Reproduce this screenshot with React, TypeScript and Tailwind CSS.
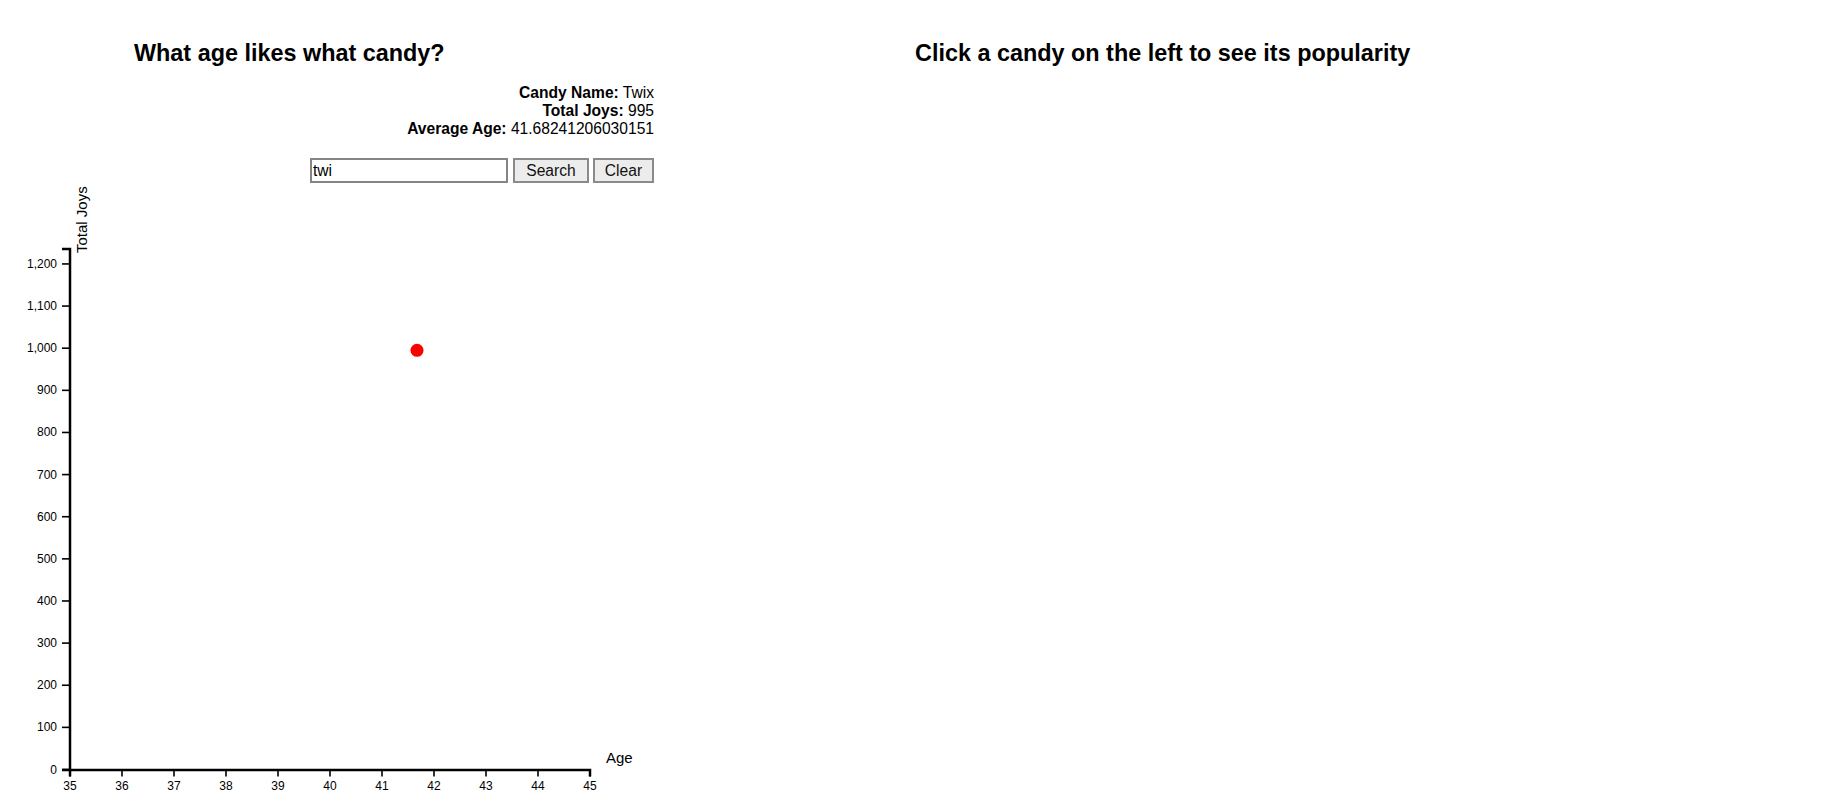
const yTicks = [0, 100, 200, 300, 400, 500, 600, 700, 800, 900, 1000, 1100, 1200]
const xTicks = [35, 36, 37, 38, 39, 40, 41, 42, 43, 44, 45]

// chart coords are page coords minus the svg's top (183)
const top = 183
const yOf = (v: number) => 769.5 - v * 0.4213 - top
const xOf = (a: number) => 70 + (a - 35) * 52

function Chart() {
    const y0 = yOf(0)
    const yTop = 249 - top
    return (
        <svg width="660" height="628" className="block" style={{ fontFamily: '"Liberation Sans", Arial, sans-serif' }}>
            <text transform={`translate(87,${253 - top}) rotate(-90)`} fontSize="15" fill="#000">
                Total Joys
            </text>
            <g>
                <path d={`M62,${yTop}H70V${y0 + 0.5}H62`} fill="none" stroke="#000" strokeWidth="2.5" />
                {yTicks.map((v) => (
                    <g key={v}>
                        <line x1="62" x2="70" y1={yOf(v)} y2={yOf(v)} stroke="#000" strokeWidth="1.6" />
                        <text x="57" y={yOf(v) + 4} fontSize="12" textAnchor="end" fill="#000">
                            {v.toLocaleString('en-US')}
                        </text>
                    </g>
                ))}
            </g>
            <g>
                <path d={`M70,${y0 + 7}V${y0 + 0.5}H590V${y0 + 7}`} fill="none" stroke="#000" strokeWidth="2.5" />
                {xTicks.map((a) => (
                    <g key={a}>
                        <line x1={xOf(a)} x2={xOf(a)} y1={y0} y2={y0 + 7} stroke="#000" strokeWidth="1.6" />
                        <text x={xOf(a)} y={789.5 - top} fontSize="12" textAnchor="middle" fill="#000">
                            {a}
                        </text>
                    </g>
                ))}
            </g>
            <text x="606" y={763 - top} fontSize="15" fill="#000">
                Age
            </text>
            <circle cx="417" cy={yOf(995)} r="6.5" fill="#ff0000" />
        </svg>
    )
}

export default function App() {
    return (
        <div className="flex bg-white text-black" style={{ fontFamily: '"Liberation Sans", Arial, sans-serif' }}>
            <div className="w-[654px] shrink-0">
                <h2 className="pt-[40px] pl-[134px] text-[23.4px] leading-[26px] font-bold">What age likes what candy?</h2>
                <div className="mt-[18px] text-right text-[15.6px] leading-[18px]">
                    <div><b>Candy Name:</b> Twix</div>
                    <div><b>Total Joys:</b> 995</div>
                    <div><b>Average Age:</b> 41.68241206030151</div>
                </div>
                <div className="mt-[20px] flex justify-end gap-[4px] h-[25px]">
                    <input
                        defaultValue="twi"
                        className="w-[198px] h-[25px] mr-[1px] border-2 border-[#858585] px-[1px] text-[15.6px] outline-none"
                    />
                    <button className="w-[76px] h-[25px] border-2 border-[#8a8a8a] bg-[#ececec] text-[15.6px] leading-none text-[#111]">
                        Search
                    </button>
                    <button className="w-[61px] h-[25px] border-2 border-[#8a8a8a] bg-[#ececec] text-[15.6px] leading-none text-[#111]">
                        Clear
                    </button>
                </div>
                <Chart />
            </div>
            <div className="pl-[261px]">
                <h2 className="pt-[40px] text-[23.4px] leading-[26px] font-bold whitespace-nowrap">
                    Click a candy on the left to see its popularity
                </h2>
            </div>
        </div>
    )
}
